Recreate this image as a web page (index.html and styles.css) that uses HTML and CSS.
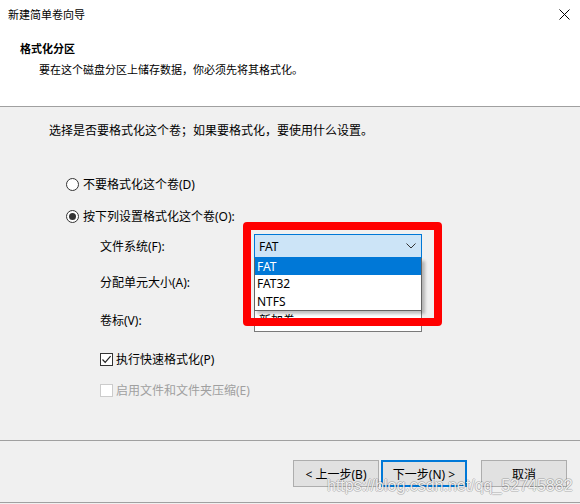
FILE: index.html
```html
<!DOCTYPE html>
<html lang="zh-CN">
<head>
<meta charset="utf-8">
<title>新建简单卷向导</title>
<link rel="stylesheet" href="styles.css">
</head>
<body>
<div class="win">
  <div class="header">
    <div class="titlebar">
      <span class="title">新建简单卷向导</span>
      <svg class="close" width="11" height="11" viewBox="0 0 11 11"><path d="M0.5 0.5 L10.5 10.5 M10.5 0.5 L0.5 10.5" stroke="#000" stroke-width="1"/></svg>
    </div>
    <div class="head-title">格式化分区</div>
    <div class="head-sub">要在这个磁盘分区上储存数据，你必须先将其格式化。</div>
  </div>

  <div class="content">
    <div class="intro">选择是否要格式化这个卷；如果要格式化，要使用什么设置。</div>

    <div class="radio-row first"><span class="radio"></span><span>不要格式化这个卷(D)</span></div>
    <div class="radio-row second"><span class="radio checked"></span><span>按下列设置格式化这个卷(O):</span></div>

    <div class="fields">
      <div class="field-row">
        <span class="label">文件系统(F):</span>
        <div class="combo focused">
          <span>FAT</span>
          <svg class="chev" width="10" height="6" viewBox="0 0 10 6"><path d="M0.5 0.5 L5 5 L9.5 0.5" fill="none" stroke="#333" stroke-width="1"/></svg>
        </div>
      </div>
      <div class="field-row r2">
        <span class="label">分配单元大小(A):</span>
        <div class="combo"></div>
      </div>
      <div class="field-row r3">
        <span class="label">卷标(V):</span>
        <div class="textbox"><span>新加卷</span></div>
      </div>
    </div>

    <div class="check-row c1"><span class="check on"><svg width="11" height="11" viewBox="0 0 11 11"><path d="M1.5 5.5 L4.2 8.3 L9.6 2.2" fill="none" stroke="#222" stroke-width="1.2"/></svg></span><span>执行快速格式化(P)</span></div>
    <div class="check-row c2 disabled"><span class="check"></span><span>启用文件和文件夹压缩(E)</span></div>

    <div class="dropdown">
      <div class="opt sel">FAT</div>
      <div class="opt">FAT32</div>
      <div class="opt">NTFS</div>
    </div>
    <div class="redbox"></div>
  </div>

  <div class="footer">
    <div class="buttons">
      <button class="btn">&lt; 上一步(B)</button>
      <button class="btn default">下一步(N) &gt;</button>
      <button class="btn cancel">取消</button>
    </div>
    <div class="watermark">https://blog.csdn.net/qq_52745882</div>
  </div>
</div>
</body>
</html>
```

FILE: styles.css
```css
* { box-sizing: border-box; }
html, body { margin: 0; padding: 0; }
body {
  width: 580px;
  height: 504px;
  overflow: hidden;
  background: #f0f0f0;
  font-family: "Noto Sans", "Noto Sans CJK SC", sans-serif;
  font-size: 12px;
  color: #000;
}
.win { position: relative; width: 580px; height: 504px; }

.header {
  height: 107px;
  background: #fff;
  border-bottom: 1px solid #a0a0a0;
}
.titlebar {
  height: 30px;
  display: flex;
  align-items: center;
  justify-content: space-between;
  padding: 0 10px 0 8px;
}
.title { font-size: 11px; line-height: 30px; }
.close { display: block; margin-top: -1px; }
.head-title {
  margin-top: 9px;
  padding-left: 20px;
  font-size: 11px;
  font-weight: bold;
  line-height: 20px;
}
.head-sub {
  padding-left: 39px;
  font-size: 11px;
  line-height: 22px;
}

.content {
  position: relative;
  height: 333px;
  padding-top: 14px;
}
.intro { padding-left: 49px; line-height: 20px; }

.radio-row {
  display: flex;
  align-items: center;
  gap: 4px;
  padding-left: 66px;
  height: 20px;
}
.radio-row.first { margin-top: 33px; }
.radio-row.second { margin-top: 12px; }
.radio {
  width: 13px; height: 13px;
  border: 1px solid #333;
  border-radius: 50%;
  background: #fff;
  display: flex; align-items: center; justify-content: center;
}
.radio.checked::after {
  content: "";
  width: 7px; height: 7px;
  border-radius: 50%;
  background: #333;
}

.fields { padding-left: 100px; margin-top: 8px; }
.field-row {
  display: flex;
  align-items: center;
  height: 24px;
}
.field-row.r2 { margin-top: 12px; }
.field-row.r3 { margin-top: 14px; }
.label { width: 154px; }
.combo {
  width: 168px; height: 24px;
  border: 1px solid #adadad;
  background: #e1e1e1;
  display: flex; align-items: center; justify-content: space-between;
  padding: 0 4px 0 4px;
}
.combo.focused { background: #cce4f7; border-color: #0078d7; }
.chev { margin-right: 1px; }
.textbox {
  width: 168px; height: 24px;
  border: 1px solid #7a7a7a;
  background: #fff;
  display: flex; align-items: center;
  padding: 0 4px;
}

.check-row {
  display: flex;
  align-items: center;
  gap: 3px;
  padding-left: 100px;
  height: 20px;
}
.check-row.c1 { margin-top: 17px; }
.check-row.c2 { margin-top: 11px; }
.check {
  width: 13px; height: 13px;
  border: 1px solid #333;
  background: #fff;
  display: flex; align-items: center; justify-content: center;
}
.check svg { display: block; }
.check-row.disabled { color: #a0a0a0; }
.check-row.disabled .check { border-color: #cccccc; }

.dropdown {
  position: absolute;
  left: 254px;
  top: 151px;
  width: 168px;
  height: 53px;
  background: #fff;
  border: 1px solid #646464;
  border-top: none;
  box-shadow: 3px 3px 3px rgba(0,0,0,0.25);
}
.opt {
  height: 17.3px;
  line-height: 17px;
  padding-left: 2px;
}
.opt.sel { background: #0078d7; color: #fff; }

.redbox {
  position: absolute;
  left: 243px;
  top: 115px;
  width: 199px;
  height: 104px;
  border: 8px solid #ff0000;
  border-radius: 4px;
}

.footer {
  position: relative;
  height: 63px;
  border-top: 1px solid #a0a0a0;
  border-bottom: 1px solid #a0a0a0;
}
.buttons {
  display: flex;
  padding: 19px 0 0 293px;
}
.btn {
  width: 86px; height: 27px;
  background: #e1e1e1;
  border: 1px solid #adadad;
  font: inherit;
  font-size: 12px;
  color: #000;
  padding: 0;
}
.btn.default { margin-left: 2px; border: 2px solid #0078d7; }
.btn.cancel { margin-left: 14px; }
.watermark {
  position: absolute;
  left: 327px;
  top: 35px;
  font-family: "Liberation Sans", sans-serif;
  font-size: 16px;
  line-height: 19px;
  color: rgba(255,255,255,0.85);
  text-shadow: 1px 0 0 rgba(0,0,0,0.18), -1px 0 0 rgba(0,0,0,0.18), 0 1px 0 rgba(0,0,0,0.18), 0 -1px 0 rgba(0,0,0,0.18);
}
```
